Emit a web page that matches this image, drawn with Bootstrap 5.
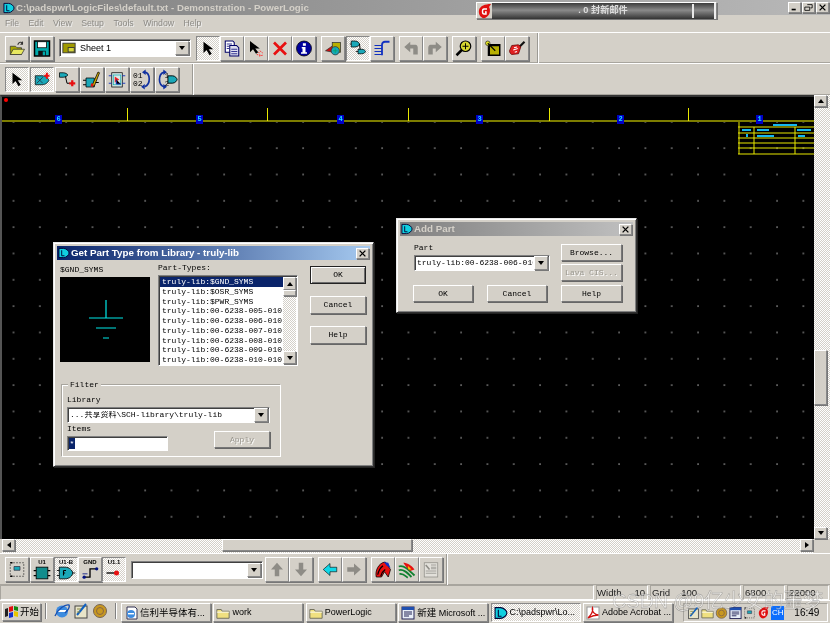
<!doctype html>
<html lang="en">

<head>
	<meta charset="utf-8">
	<meta name="viewport" content="width=device-width, initial-scale=1">
	<title>PowerLogic</title>
	<link href="https://cdn.jsdelivr.net/npm/bootstrap@5.3.5/dist/css/bootstrap.min.css" rel="stylesheet"
		crossorigin="anonymous">
	<style>
		html, body { margin: 0; background: #d4d0c8; overflow: hidden; }
		.app { width: 830px; height: 623px; background: #d4d0c8; overflow: hidden; filter: blur(.5px);
			font-family: "Liberation Sans", "Noto Sans CJK SC", sans-serif; font-size: 10px; color: #000; line-height: 1; }

		.raised { background: #d4d0c8; border: 1px solid; border-color: #fff #888 #888 #fff; box-shadow: 1px 1px 0 #777; }
		.sunken { border: 1px solid; border-color: #808080 #fff #fff #808080; box-shadow: inset 1px 1px 0 #404040; }
		.etched { border: 1px solid; border-color: #a8a59e #fff #fff #a8a59e; }

		.main-title { height: 15px; padding: 0 0 0 3px; background: linear-gradient(90deg, #808080, #b8b8b8); color: #d4d0c8; font-weight: 700; font-size: 9.7px; }
		.mail-box { left: 476px; top: 2px; width: 241px; height: 17px; background: #d4d0c8; }
		.mail-logo { width: 15px; height: 17px; }
		.mail-bar { width: 224px; height: 16px; background: linear-gradient(#3c3c3c, #8a8a8a 45%, #333); color: #ddd; font-size: 9.2px; border-right: 2px solid #eee; }
		.mail-tick { left: 200px; top: 1px; width: 2px; height: 14px; background: #e8e8e8; }
		.win-ctrls { right: 1px; top: 2px; gap: 1px; }
		.win-btn { width: 13px; height: 11px; }
		.menu-strip { height: 17px; padding-left: 5px; gap: 9.5px; color: #8c8a85; font-size: 8.7px; text-shadow: 1px 1px 0 #eee; }

		.bar-row { height: 31px; border-top: 1px solid #fff; box-shadow: inset 0 -1px 0 #a8a59e; }
		.bar-tall { height: 32px; }
		.bar-first { width: 538px; height: 100%; padding-left: 5px; border-right: 1px solid #9c9a94; box-shadow: 1px 0 0 #fff; }
		.bar-second { width: 193px; height: 100%; padding-left: 5px; border-right: 1px solid #9c9a94; box-shadow: 1px 0 0 #fff; }
		.tool { width: 24px; height: 25px; flex: none; padding: 2px; }
		.tool svg { width: 100%; height: 100%; display: block; }
		.tool-on { border-color: #888 #fff #fff #888; box-shadow: none;
			background: repeating-conic-gradient(#fff 0 25%, #d4d0c8 0 50%) 0 0 / 2px 2px; }
		.tool-w { margin-left: 1px; }
		.gap-s { margin-left: 5px; }

		.combo { height: 18px; background: #fff; flex: none; }
		.combo-arrow { width: 14px; height: 14px; margin: 1px; flex: none; }
		.tri-down { width: 0; height: 0; border: 3px solid transparent; border-top: 4px solid #000; border-bottom: 0; }
		.tri-up { width: 0; height: 0; border: 3px solid transparent; border-bottom: 4px solid #000; border-top: 0; }
		.tri-left { width: 0; height: 0; border: 3px solid transparent; border-right: 4px solid #000; border-left: 0; }
		.tri-right { width: 0; height: 0; border: 3px solid transparent; border-left: 4px solid #000; border-right: 0; }
		.sheet-combo { width: 132px; margin-left: 5px; font-size: 9px; }
		.sheet-ico { width: 14px; height: 12px; margin: 0 4px 0 2px; }

		.work-row { height: 444px; }
		.sheet-canvas { width: 814px; position: relative; border-left: 2px solid #555; border-top: 2px solid #333; background-color: #000;
			background-image: radial-gradient(circle at 1px 1px, #999 .5px, transparent .9px);
			background-size: 26.33px 26.33px; background-position: 10.5px -2.5px; overflow: hidden; }
		.rule-line { left: 0; right: 0; top: 23px; height: 2px; background: #7d7d00; }
		.rule-tick { top: 11px; width: 1px; height: 13px; background: #e8e800; }
		.rule-num { top: 18px; width: 7px; height: 9px; background: #0000c8; color: #19e3ff; font: 700 7px/9px "Liberation Mono", monospace; text-align: center; }
		.red-dot { left: 2px; top: 1px; width: 4px; height: 4px; border-radius: 50%; background: #f00; }
		.title-block { left: 736px; top: 25px; width: 76px; height: 33px; }

		.scroll-track { background: repeating-conic-gradient(#fff 0 25%, #d4d0c8 0 50%) 0 0 / 2px 2px; }
		.v-scroll { width: 16px; }
		.sc-btn { width: 13px; height: 12px; flex: none; }
		.v-thumb { width: 13px; height: 55px; margin-top: 243px; }
		.h-row { height: 14px; }
		.h-scroll { width: 811px; margin-left: 2px; }
		.h-thumb { width: 190px; height: 12px; margin-left: 207px; }

		.bottom-bar { height: 32px; padding-left: 5px; border-top: 1px solid #fff; box-shadow: inset 0 -1px 0 #a8a59e; }
		.bottom-end { width: 1px; height: 100%; margin-left: 3px; background: #9c9a94; box-shadow: 1px 0 0 #fff; }
		.tiny-tool { font: 700 6px/6px "Liberation Sans", sans-serif; text-align: center; padding: 1px; }
		.tiny-tool svg { height: 16px; }
		.part-combo { width: 132px; margin-left: 5px; margin-right: 2px; }

		.status-row { height: 15px; gap: 2px; font-size: 9.6px; color: #222; }
		.st-main { width: 594px; height: 100%; }
		.st-width { width: 52px; height: 100%; padding-left: 0; gap: 13px; }
		.st-grid { width: 91px; height: 100%; padding-left: 1px; gap: 11px; }
		.st-num { width: 42px; height: 100%; padding-left: 1px; }

		.task-row { height: 22px; padding: 2px 0 0 2px; border-top: 1px solid #fff; font-size: 9px; }
		.start-btn { width: 39px; height: 18px; font-weight: 400; gap: 1px; padding: 0 1px; flex: none; white-space: nowrap; }
		.start-ico { width: 15px; height: 14px; flex: none; }
		.cjk-txt { font-size: 9.5px; }
		.task-sep { width: 2px; height: 16px; margin: 0 4px; border-left: 1px solid #808080; border-right: 1px solid #fff; flex: none; }
		.quick-ico { width: 16px; height: 16px; flex: none; margin-right: 3px; }
		.quick-first { margin-left: 3px; }
		.task-btn { width: 90px; height: 19px; margin-right: 2.4px; padding: 0 2px; flex: none; gap: 2px; white-space: nowrap; overflow: hidden; }
		.task-on { border-color: #888 #fff #fff #888; box-shadow: none;
			background: repeating-conic-gradient(#fff 0 25%, #d4d0c8 0 50%) 0 0 / 2px 2px; }
		.task-ico { width: 14px; height: 14px; flex: none; }
		.tray { width: 145px; height: 19px; margin-left: 8px; padding: 0 3px; gap: 1px; font-size: 10px; }
		.tray-ico { width: 13px; height: 14px; flex: none; }
		.ime-ico { font-size: 8px; line-height: 14px; white-space: nowrap; overflow: hidden; }
		.clock { margin-left: 9px; }

		.dlg { background: #d4d0c8; border: 1px solid; border-color: #e8e8e8 #303030 #303030 #e8e8e8; box-shadow: inset 1px 1px 0 #fff, inset -1px -1px 0 #808080, 1px 1px 0 #222; padding: 3px; }
		.dlg-lib { left: 53px; top: 242px; width: 321px; height: 225px; }
		.dlg-add { left: 396px; top: 218px; width: 241px; height: 95px; }
		.dlg-title { height: 14px; padding: 0 1px; color: #fff; font-weight: 700; font-size: 9.8px; }
		.title-live { background: linear-gradient(90deg, #0a246a, #a6caf0); }
		.title-idle { background: linear-gradient(90deg, #808080, #c0c0c0); color: #d4d0c8; }
		.dlg-x { width: 13px; height: 11px; margin-left: auto; }
		.dlg-x svg, .win-btn svg { width: 100%; height: 100%; display: block; }
		.dlg-ico { width: 12px; height: 12px; margin-right: 1px; flex: none; }

		.sys-txt { font-family: "Liberation Mono", "Noto Sans CJK SC", monospace; font-size: 8px; color: #000; }
		.dlg-lib-body { padding: 4px 3px 0 3px; gap: 8px; }
		.left-col { width: 90px; margin-top: 2px; }
		.cap { height: 9px; margin-bottom: 2px; white-space: nowrap; }
		.preview { width: 90px; height: 85px; background: #000; }
		.preview svg { display: block; }
		.mid-col { width: 140px; }
		.listbox { width: 140px; height: 91px; background: #fff; padding: 1px; }
		.part-list { width: 124px; border-radius: 0; overflow: hidden; }
		.part-list .list-group-item { border: 0; padding: 0 0 0 2px; height: 9.75px; line-height: 9.75px; font-size: 8px; background: transparent; color: #000; white-space: nowrap; border-radius: 0; }
		.part-list .list-group-item.active { background: #0a246a; color: #fff; }
		.list-scroll { width: 13px; }
		.sc-mini { width: 13px; height: 13px; flex: none; }
		.list-thumb { width: 13px; height: 6px; flex: none; }
		.btn-col { width: 56px; margin: 2px 0 0 4px; gap: 12px; }
		.btn.w-btn { --bs-btn-padding-x: 0; --bs-btn-padding-y: 0; border-radius: 0; font: 400 8px/1 "Liberation Mono", monospace; color: #000; height: 18px; width: 56px; background: #d4d0c8;
			border: 1px solid; border-color: #fff #777 #777 #fff; box-shadow: 1px 1px 0 #666; }
		.btn.w-btn.w-default { border-color: #222; box-shadow: inset 1px 1px 0 #fff, inset -1px -1px 0 #6c6c6c; }
		.btn.w-btn:disabled { opacity: 1; color: #9a978f; text-shadow: 1px 1px 0 #fff; }
		.btn.w-wide { width: 61px; height: 17px; }
		.filter-box { width: 220px; height: 73px; margin: 18px 0 0 4px; padding: 11px 10px 0 5px; border: 1px solid; border-color: #a8a59e #fff #fff #a8a59e; box-shadow: inset 1px 1px 0 #fff; }
		.filter-legend { left: 6px; top: -4px; background: #d4d0c8; padding: 0 2px; }
		.lib-combo { width: 203px; height: 16px; margin-bottom: 2px; }
		.lib-combo .combo-text { padding-left: 2px; white-space: nowrap; overflow: hidden; }
		.form-control.items-input { width: 101px; height: 15px; min-height: 0; padding: 0 0 0 1px; border-radius: 0; background: #fff; font-size: 8px; }
		.sel-star { display: inline-block; width: 6px; height: 11px; background: #0a246a; color: #fff; text-align: center; line-height: 11px; margin-top: 1px; }
		.btn.w-apply { width: 56px; height: 17px; margin-top: -5px; }
		.add-body { padding: 8px 11px 0 14px; }
		.add-left { width: 136px; margin-right: 11px; }
		.add-combo { width: 136px; height: 16px; margin-top: 0; }
		.add-combo .combo-text { padding-left: 2px; white-space: nowrap; overflow: hidden; }
		.add-right { gap: 3px; }
		.add-foot { padding: 4px 11px 0 13px; gap: 14px; }
		.add-foot .w-wide { width: 60px; }
		.add-foot .w-wide:last-child { width: 61px; }

		.watermark { left: 612px; top: 591px; font-size: 20px; letter-spacing: -.2px; color: rgba(255, 255, 255, .45); -webkit-text-stroke: .3px rgba(70, 70, 70, .55); white-space: nowrap; }
	</style>
</head>

<body>
	<svg width="0" height="0" class="position-absolute">
		<defs>
			<symbol id="i-arrow" viewBox="0 0 24 24"><path d="M6 3v15l4-4 4 7 3-2-4-6h6z" fill="#000"/></symbol>
			<symbol id="i-open" viewBox="0 0 24 24"><path d="M3 9h7l2 2h6v9H3z" fill="#a8a800" stroke="#333"/><path d="M3 20l4-7h15l-4 7z" fill="#e8e860" stroke="#333"/><path d="M13 7c1-4 5-4 7-2" fill="none" stroke="#333" stroke-width="1.4"/><path d="M20 2v5h-4z" fill="#333"/></symbol>
			<symbol id="i-save" viewBox="0 0 24 24"><rect x="2" y="2" width="20" height="20" fill="#0aa" stroke="#000" stroke-width="2"/><rect x="6" y="3" width="12" height="8" fill="#fff" stroke="#000"/><rect x="7" y="15" width="10" height="7" fill="#111"/><rect x="13" y="16" width="3" height="5" fill="#0aa"/></symbol>
			<symbol id="i-sheet" viewBox="0 0 16 13"><rect x="1" y="1" width="14" height="11" fill="#a09a00" stroke="#333"/><rect x="7" y="6" width="7" height="5" fill="#d8d840" stroke="#333"/></symbol>
			<symbol id="i-copy" viewBox="0 0 24 24"><path d="M3 2h10l2 2v13H3z" fill="#fff" stroke="#006" stroke-width="1.4"/><path d="M9 8h9l3 3v11H9z" fill="#dde" stroke="#006" stroke-width="1.4"/><path d="M5 6h7M5 9h3M5 12h3M11 13h8M11 16h8M11 19h8" stroke="#228" stroke-width="1.2"/></symbol>
			<symbol id="i-filter" viewBox="0 0 24 24"><path d="M4 2v15l4-4 4 6 3-2-4-5h6z" fill="#000"/><path d="M15 17l2 1M13 20l6 1M17 15l4 3M16 22l5-1" stroke="#f33" stroke-width="1.3" stroke-dasharray="2 1"/></symbol>
			<symbol id="i-x" viewBox="0 0 24 24"><path d="M4 4l16 16M20 4L4 20" stroke="#e81010" stroke-width="3.6"/></symbol>
			<symbol id="i-info" viewBox="0 0 24 24"><circle cx="12" cy="12" r="10" fill="#00009c" stroke="#000"/><rect x="10.500" y="5" width="4" height="3.400" fill="#fff"/><path d="M9 10h5v7h2v2H8v-2h2v-5H9z" fill="#fff"/></symbol>
			<symbol id="i-cell" viewBox="0 0 24 24"><path d="M2 15L12 8v9z" fill="#d01010" stroke="#333"/><rect x="11" y="4" width="11" height="13" fill="#b8b000" stroke="#333"/><circle cx="15" cy="15" r="5.500" fill="#18a8b8" stroke="#333"/><path d="M12 15h6M15 12v6" stroke="#0a6"/></symbol>
			<symbol id="i-gates" viewBox="0 0 24 24"><path d="M3 2h5c4 0 6 3 6 4s-2 4-6 4H3z" fill="#1aa8b8" stroke="#000"/><path d="M14 6l1 9h1" fill="none" stroke="#000" stroke-width="1.4"/><path d="M12 13h5c3 0 5 2 5 3s-2 3-5 3h-5z" fill="#1aa8b8" stroke="#000"/><path d="M1 6h2M9 16h3" stroke="#000"/></symbol>
			<symbol id="i-bus" viewBox="0 0 24 24"><path d="M12 21V7c0-3 2-4 4-4h6" fill="none" stroke="#1030c0" stroke-width="2.4"/><path d="M2 8h10M2 12h10M2 16h10M2 20h10" stroke="#1030c0" stroke-width="1.6"/></symbol>
			<symbol id="i-undo" viewBox="0 0 24 24"><path d="M3 10l8-7v4h7c2 0 3 2 3 4v9h-6v-8h-4v5z" fill="#8e8c86"/></symbol>
			<symbol id="i-redo" viewBox="0 0 24 24"><path d="M21 10l-8-7v4H6c-2 0-3 2-3 4v9h6v-8h4v5z" fill="#8e8c86"/></symbol>
			<symbol id="i-zoom" viewBox="0 0 24 24"><circle cx="14" cy="9" r="7" fill="#d8d830" stroke="#000" stroke-width="1.6"/><path d="M14 5v8M10 9h8" stroke="#000" stroke-width="1.3"/><path d="M9 14l-7 7" stroke="#000" stroke-width="3.400"/></symbol>
			<symbol id="i-sel" viewBox="0 0 24 24"><rect x="5" y="6" width="17" height="16" fill="#000"/><rect x="8" y="9" width="12" height="11" fill="#b8b000"/><circle cx="5" cy="5" r="3" fill="#e8e820" stroke="#333"/><path d="M5 5l10 10" stroke="#000" stroke-width="1.5"/></symbol>
			<symbol id="i-brush" viewBox="0 0 24 24"><path d="M14 9l7-7 2 2-7 7z" fill="#111"/><path d="M5 8l9-1 3 3-3 9-9 1c-2-1-3-3-3-5z" fill="#e02020" stroke="#600"/><path d="M8 11l4-1M7 14l6-2M9 17l3-1" stroke="#fff" stroke-width="1.4"/></symbol>
			<symbol id="i-addcomp" viewBox="0 0 24 24"><path d="M3 7h9c5 0 9 4 9 6s-4 6-9 6H3z" fill="#1aa8b8" stroke="#000"/><path d="M5 9l8 8M13 9l-8 8" stroke="#223"/><path d="M15 7h7M18.500 3v8" stroke="#f01010" stroke-width="2.6"/></symbol>
			<symbol id="i-addwire" viewBox="0 0 24 24"><path d="M2 3h5c3 0 6 2 6 3s-3 3-6 3H2z" fill="#1aa8b8" stroke="#000"/><path d="M10 8l2 9h4" fill="none" stroke="#000" stroke-width="1.3"/><path d="M15 17h8M19 13v8" stroke="#e81010" stroke-width="3"/></symbol>
			<symbol id="i-edit" viewBox="0 0 24 24"><path d="M4 10h11v12H4z" fill="#1aa8b8" stroke="#000"/><path d="M0 13h4M0 19h4M15 16h6" stroke="#000" stroke-width="1.4"/><path d="M12 20L20 2l2 1-7 18z" fill="#d8b000" stroke="#000"/><path d="M11 17l3 1-1 4-3-1z" fill="#e01010"/></symbol>
			<symbol id="i-sym" viewBox="0 0 24 24"><rect x="5" y="3" width="14" height="19" fill="#d8e8e8" stroke="#000"/><rect x="7" y="6" width="10" height="13" fill="none" stroke="#1aa"/><path d="M9 8l6 4-6 4z" fill="#f02020"/><path d="M1 7h4M1 17h4M19 7h4M19 17h4M11 12v6h6" stroke="#1030c0" stroke-width="1.2"/></symbol>
			<symbol id="i-curve" viewBox="0 0 24 24"><path d="M15 4c6 1 7 13 0 16" fill="none" stroke="#1030a0" stroke-width="1.8"/><path d="M16 1v6l-4-3zM15 17v6l-4-3z" fill="#1030a0"/></symbol>
			<symbol id="i-swap" viewBox="0 0 24 24"><path d="M9 4C2 6 2 18 9 20" fill="none" stroke="#1030a0" stroke-width="1.8"/><path d="M8 1v6l4-3zM8 17v6l4-3z" fill="#1030a0"/><path d="M13 8h5c3 0 5 3 5 4s-2 4-5 4h-5z" fill="#1aa8b8" stroke="#000"/></symbol>
			<symbol id="i-frame" viewBox="0 0 24 24"><rect x="3" y="3" width="18" height="18" fill="none" stroke="#222" stroke-dasharray="2 2"/><path d="M8 8h8v5H8z" fill="#1aa8b8" stroke="#334"/><path d="M3 21h3M3 3h3" stroke="#000" stroke-width="2"/></symbol>
			<symbol id="i-chip" viewBox="0 0 24 16"><rect x="5" y="1" width="14" height="14" fill="#128c8c" stroke="#000"/><path d="M2 5h3M2 11h3M19 5h3M19 11h3" stroke="#000" stroke-width="1.5"/></symbol>
			<symbol id="i-gate" viewBox="0 0 24 16"><path d="M4 1h7c5 0 9 4 9 7s-4 7-9 7H4z" fill="#1aa8b8" stroke="#000"/><path d="M1 5h3M1 11h3M20 8h3" stroke="#000"/><path d="M9 5v6M9 5h3M9 8h2" stroke="#000" stroke-width="1.3"/></symbol>
			<symbol id="i-net" viewBox="0 0 24 16"><path d="M5 13h7V3h8" fill="none" stroke="#000" stroke-width="1.6"/><circle cx="20" cy="3" r="2" fill="#001080"/><circle cx="5" cy="13" r="2" fill="#001080"/><path d="M3 9h6" stroke="#001080"/></symbol>
			<symbol id="i-pin" viewBox="0 0 24 16"><path d="M3 8h11" stroke="#000" stroke-width="1.6"/><circle cx="15" cy="8" r="3" fill="#e81010"/></symbol>
			<symbol id="i-up" viewBox="0 0 24 24"><path d="M12 3l8 9h-5v9H9v-9H4z" fill="#8e8c86"/></symbol>
			<symbol id="i-down" viewBox="0 0 24 24"><path d="M12 21l8-9h-5V3H9v9H4z" fill="#8e8c86"/></symbol>
			<symbol id="i-left" viewBox="0 0 24 24"><path d="M3 12l9-8v5h9v6h-9v5z" fill="#10d8e8" stroke="#000" stroke-width=".8"/></symbol>
			<symbol id="i-right" viewBox="0 0 24 24"><path d="M21 12l-9-8v5H3v6h9v5z" fill="#8e8c86"/></symbol>
			<symbol id="i-pour" viewBox="0 0 24 24"><path d="M3 22C1 14 6 3 15 2l7 10-3 10-5-7-4 7z" fill="#e81010" stroke="#000"/><path d="M5 19c1-5 3-9 7-12M9 21c1-4 3-7 6-9" stroke="#000" stroke-width="1.6" fill="none"/><path d="M13 2l6 1 3 7-5-3z" fill="#1030c0"/></symbol>
			<symbol id="i-flame" viewBox="0 0 24 24"><path d="M1 8c7-2 12 3 21 12M1 13c6-2 11 3 17 9M2 18c5-1 7 2 11 5" fill="none" stroke="#108030" stroke-width="2.4"/><path d="M7 3c5 0 11 3 15 9l-6 2C12 10 10 7 7 3z" fill="#e81010"/><path d="M13 7l5 5-4 0z" fill="#f0e000"/></symbol>
			<symbol id="i-doc" viewBox="0 0 24 24"><rect x="3" y="3" width="18" height="19" fill="#e2e0da" stroke="#8e8c86"/><path d="M5 14h14M5 17h14M12 6h7M12 9h7M12 11h7" stroke="#8e8c86"/><path d="M5 6l5 6" stroke="#8e8c86" stroke-width="2"/></symbol>
			<symbol id="i-logo" viewBox="0 0 13 12"><path d="M1 1h5c3 0 6 3 6 5s-3 5-6 5H1z" fill="#10d0e0" stroke="#003" stroke-width="1"/><path d="M4 3v6h3" fill="none" stroke="#003"/></symbol>
			<symbol id="i-folder" viewBox="0 0 16 14"><path d="M1 3h5l1 2h8v8H1z" fill="#f0e080" stroke="#665"/><path d="M1 6h14" stroke="#fff"/></symbol>
			<symbol id="i-win" viewBox="0 0 15 14"><path d="M1 4l3-1v8l-3 1z" fill="#222"/><path d="M5 2l4-1v5l-4 1z" fill="#e01010"/><path d="M10 1l4 1v4l-4-1z" fill="#108810"/><path d="M5 8l4-1v5l-4 1z" fill="#1030d0"/><path d="M10 6l4 1v5l-4-1z" fill="#e8c800"/></symbol>
			<symbol id="i-ie" viewBox="0 0 16 16"><ellipse cx="8" cy="8.500" rx="6" ry="6" fill="#3d8ce0"/><rect x="4" y="7" width="8" height="2" fill="#fff"/><path d="M1 13C4 6 11 1 15 2c1 2-2 6-4 8" fill="none" stroke="#1a50b0" stroke-width="1.4"/></symbol>
			<symbol id="i-desk" viewBox="0 0 16 16"><rect x="2" y="3" width="12" height="12" fill="#e8e4c8" stroke="#444"/><path d="M4 12L13 1" stroke="#1060c0" stroke-width="2"/><path d="M4 6h4M4 9h3" stroke="#884"/></symbol>
			<symbol id="i-coin" viewBox="0 0 16 16"><circle cx="8" cy="8" r="6.500" fill="#c89820" stroke="#765"/><circle cx="8" cy="8" r="3.500" fill="none" stroke="#864"/></symbol>
			<symbol id="i-pageie" viewBox="0 0 14 14"><path d="M3 1h8l2 2v10H3z" fill="#fff" stroke="#335"/><circle cx="7" cy="8" r="4" fill="#3d8ce0"/><rect x="4" y="7" width="6" height="1.400" fill="#fff"/></symbol>
			<symbol id="i-word" viewBox="0 0 14 14"><rect x="1" y="1" width="12" height="12" fill="#e8eef8" stroke="#225"/><rect x="1" y="1" width="12" height="3" fill="#2050b0"/><path d="M3 6h8M3 8h8M3 10h5" stroke="#225"/></symbol>
			<symbol id="i-pdf" viewBox="0 0 14 14"><rect x="1" y="1" width="12" height="12" fill="#fff" stroke="#999"/><path d="M2 12C6 8 7 4 6.500 2c-1 3 2 7 6 7-3 0-7 1-10.500 3z" fill="none" stroke="#d01010" stroke-width="1.3"/></symbol>
			<symbol id="i-mailg" viewBox="0 0 15 17"><path d="M2 7C3 3 8 1 14 1l-2 3c2 3 1 9-4 11-4 1-7-4-6-8z" fill="#e01010"/><path d="M10 6H7C5 6 5 11 7 11h2V9H8" fill="none" stroke="#fff" stroke-width="1.4"/></symbol>
		</defs>
	</svg>

	<div class="app d-flex flex-column position-relative">

		<div class="main-title d-flex align-items-center position-relative">
			<svg class="dlg-ico"><use href="#i-logo"/></svg>
			<span>C:\padspwr\LogicFiles\default.txt - Demonstration - PowerLogic</span>
			<div class="mail-box position-absolute d-flex raised">
				<svg class="mail-logo"><use href="#i-mailg"/></svg>
				<div class="mail-bar d-flex align-items-center justify-content-center position-relative">
					<span>. 0 封新邮件</span>
					<span class="mail-tick position-absolute"></span>
				</div>
			</div>
			<div class="win-ctrls position-absolute d-flex">
				<div class="win-btn raised"><svg viewBox="0 0 13 11"><path d="M3 8h5" stroke="#000" stroke-width="2"/></svg></div>
				<div class="win-btn raised"><svg viewBox="0 0 13 11"><path d="M5 2h6v4H9M2 5h6v4H2z" fill="none" stroke="#000"/></svg></div>
				<div class="win-btn raised"><svg viewBox="0 0 13 11"><path d="M3 2l7 7M10 2l-7 7" stroke="#000" stroke-width="1.6"/></svg></div>
			</div>
		</div>

		<div class="menu-strip d-flex align-items-center">
			<span>File</span><span>Edit</span><span>View</span><span>Setup</span><span>Tools</span><span>Window</span><span>Help</span>
		</div>

		<div class="bar-row d-flex">
			<div class="bar-first d-flex align-items-center">
				<div class="tool raised"><svg><use href="#i-open"/></svg></div>
				<div class="tool raised tool-w"><svg><use href="#i-save"/></svg></div>
				<div class="combo sheet-combo sunken d-flex align-items-center">
					<svg class="sheet-ico"><use href="#i-sheet"/></svg>
					<span class="flex-grow-1">Sheet 1</span>
					<div class="combo-arrow raised d-flex align-items-center justify-content-center"><span class="tri-down"></span></div>
				</div>
				<div class="tool raised tool-on gap-s"><svg><use href="#i-arrow"/></svg></div>
				<div class="tool raised"><svg><use href="#i-copy"/></svg></div>
				<div class="tool raised"><svg><use href="#i-filter"/></svg></div>
				<div class="tool raised"><svg><use href="#i-x"/></svg></div>
				<div class="tool raised"><svg><use href="#i-info"/></svg></div>
				<div class="tool raised gap-s"><svg><use href="#i-cell"/></svg></div>
				<div class="tool raised tool-on tool-w"><svg><use href="#i-gates"/></svg></div>
				<div class="tool raised"><svg><use href="#i-bus"/></svg></div>
				<div class="tool raised gap-s"><svg><use href="#i-undo"/></svg></div>
				<div class="tool raised"><svg><use href="#i-redo"/></svg></div>
				<div class="tool raised gap-s"><svg><use href="#i-zoom"/></svg></div>
				<div class="tool raised gap-s"><svg><use href="#i-sel"/></svg></div>
				<div class="tool raised"><svg><use href="#i-brush"/></svg></div>
			</div>
		</div>

		<div class="bar-row bar-tall d-flex">
			<div class="bar-second d-flex align-items-center">
				<div class="tool raised tool-on"><svg><use href="#i-arrow"/></svg></div>
				<div class="tool raised tool-on tool-w"><svg><use href="#i-addcomp"/></svg></div>
				<div class="tool raised tool-w"><svg><use href="#i-addwire"/></svg></div>
				<div class="tool raised tool-w"><svg><use href="#i-edit"/></svg></div>
				<div class="tool raised tool-w"><svg><use href="#i-sym"/></svg></div>
				<div class="tool raised tool-w position-relative sys-txt d-flex flex-column justify-content-center">
					<span>01</span><span>02</span>
					<svg class="position-absolute top-0 start-0"><use href="#i-curve"/></svg>
				</div>
				<div class="tool raised tool-w position-relative sys-txt d-flex flex-column align-items-center justify-content-center">
					<span>1</span><span>2</span>
					<svg class="position-absolute top-0 start-0"><use href="#i-swap"/></svg>
				</div>
			</div>
		</div>

		<div class="work-row d-flex">
			<div class="sheet-canvas">
				<span class="red-dot position-absolute"></span>
				<div class="rule-line position-absolute"></div>
				<span class="rule-tick position-absolute" style="left:125px"></span>
				<span class="rule-tick position-absolute" style="left:265px"></span>
				<span class="rule-tick position-absolute" style="left:406px"></span>
				<span class="rule-tick position-absolute" style="left:547px"></span>
				<span class="rule-tick position-absolute" style="left:686px"></span>
				<span class="rule-num position-absolute" style="left:53px">6</span>
				<span class="rule-num position-absolute" style="left:194px">5</span>
				<span class="rule-num position-absolute" style="left:335px">4</span>
				<span class="rule-num position-absolute" style="left:474px">3</span>
				<span class="rule-num position-absolute" style="left:615px">2</span>
				<span class="rule-num position-absolute" style="left:754px">1</span>
				<svg class="title-block position-absolute" viewBox="0 0 76 33">
					<path d="M1 0v32M16 5v27M57 5v27M0 5h76M0 11h76M0 16h76M0 21h76M0 26h76M0 32h76" fill="none" stroke="#e8e800" stroke-width="1"/>
					<rect x="35" y="2" width="24" height="2" fill="#14b8f0"/>
					<rect x="4" y="7" width="9" height="2" fill="#14b8f0"/><rect x="19" y="7" width="12" height="2" fill="#14b8f0"/><rect x="59" y="7" width="14" height="2" fill="#14b8f0"/>
					<rect x="8" y="12" width="2" height="3" fill="#14b8f0"/><rect x="19" y="13" width="17" height="2" fill="#14b8f0"/><rect x="60" y="13" width="7" height="2" fill="#14b8f0"/>
				</svg>
			</div>
			<div class="v-scroll scroll-track d-flex flex-column">
				<div class="sc-btn raised d-flex align-items-center justify-content-center"><span class="tri-up"></span></div>
				<div class="v-thumb raised"></div>
				<div class="flex-grow-1"></div>
				<div class="sc-btn raised d-flex align-items-center justify-content-center"><span class="tri-down"></span></div>
			</div>
		</div>

		<div class="h-row d-flex">
			<div class="h-scroll scroll-track d-flex">
				<div class="sc-btn raised d-flex align-items-center justify-content-center"><span class="tri-left"></span></div>
				<div class="h-thumb raised"></div>
				<div class="flex-grow-1"></div>
				<div class="sc-btn raised d-flex align-items-center justify-content-center"><span class="tri-right"></span></div>
			</div>
		</div>

		<div class="bottom-bar d-flex align-items-center">
			<div class="tool raised"><svg><use href="#i-frame"/></svg></div>
			<div class="tool raised tool-w tiny-tool"><div>U1</div><svg><use href="#i-chip"/></svg></div>
			<div class="tool raised tool-on tiny-tool"><div>U1-B</div><svg><use href="#i-gate"/></svg></div>
			<div class="tool raised tiny-tool"><div>GND</div><svg><use href="#i-net"/></svg></div>
			<div class="tool raised tool-on tiny-tool"><div>U1.1</div><svg><use href="#i-pin"/></svg></div>
			<div class="combo part-combo sunken d-flex align-items-center justify-content-end">
				<div class="combo-arrow raised d-flex align-items-center justify-content-center"><span class="tri-down"></span></div>
			</div>
			<div class="tool raised"><svg><use href="#i-up"/></svg></div>
			<div class="tool raised"><svg><use href="#i-down"/></svg></div>
			<div class="tool raised gap-s"><svg><use href="#i-left"/></svg></div>
			<div class="tool raised"><svg><use href="#i-right"/></svg></div>
			<div class="tool raised gap-s"><svg><use href="#i-pour"/></svg></div>
			<div class="tool raised"><svg><use href="#i-flame"/></svg></div>
			<div class="tool raised"><svg><use href="#i-doc"/></svg></div>
			<div class="bottom-end"></div>
		</div>

		<div class="status-row d-flex">
			<div class="st-main etched"></div>
			<div class="st-width etched d-flex align-items-center"><span>Width</span><span>10</span></div>
			<div class="st-grid etched d-flex align-items-center"><span>Grid</span><span>100</span></div>
			<div class="st-num etched d-flex align-items-center">6800</div>
			<div class="st-num etched d-flex align-items-center">22000</div>
		</div>

		<div class="task-row d-flex align-items-start">
			<div class="start-btn raised d-flex align-items-center"><svg class="start-ico"><use href="#i-win"/></svg><span class="cjk-txt">开始</span></div>
			<span class="task-sep"></span>
			<svg class="quick-ico quick-first"><use href="#i-ie"/></svg>
			<svg class="quick-ico"><use href="#i-desk"/></svg>
			<svg class="quick-ico"><use href="#i-coin"/></svg>
			<span class="task-sep"></span>
			<div class="task-btn raised d-flex align-items-center"><svg class="task-ico"><use href="#i-pageie"/></svg><span class="cjk-txt">信利半导体有...</span></div>
			<div class="task-btn raised d-flex align-items-center"><svg class="task-ico"><use href="#i-folder"/></svg><span>work</span></div>
			<div class="task-btn raised d-flex align-items-center"><svg class="task-ico"><use href="#i-folder"/></svg><span>PowerLogic</span></div>
			<div class="task-btn raised d-flex align-items-center"><svg class="task-ico"><use href="#i-word"/></svg><span><span class="cjk-txt">新建</span> Microsoft ...</span></div>
			<div class="task-btn raised task-on d-flex align-items-center"><svg class="task-ico"><use href="#i-logo"/></svg><span>C:\padspwr\Lo...</span></div>
			<div class="task-btn raised d-flex align-items-center"><svg class="task-ico"><use href="#i-pdf"/></svg><span>Adobe Acrobat ...</span></div>
			<div class="tray etched d-flex align-items-center">
				<svg class="tray-ico"><use href="#i-desk"/></svg>
				<svg class="tray-ico"><use href="#i-folder"/></svg>
				<svg class="tray-ico"><use href="#i-coin"/></svg>
				<svg class="tray-ico"><use href="#i-word"/></svg>
				<svg class="tray-ico"><use href="#i-frame"/></svg>
				<svg class="tray-ico"><use href="#i-mailg"/></svg>
				<span class="tray-ico ime-ico text-bg-primary text-center">CH</span>
				<span class="clock">16:49</span>
			</div>
		</div>

		<div class="dlg dlg-lib position-absolute">
			<div class="dlg-title title-live d-flex align-items-center">
				<svg class="dlg-ico"><use href="#i-logo"/></svg>
				<span>Get Part Type from Library - truly-lib</span>
				<div class="dlg-x raised"><svg viewBox="0 0 13 11"><path d="M3 2l7 7M10 2l-7 7" stroke="#000" stroke-width="1.6"/></svg></div>
			</div>
			<div class="dlg-lib-body d-flex sys-txt">
				<div class="left-col">
					<div class="cap">$GND_SYMS</div>
					<div class="preview">
						<svg width="90" height="85" viewBox="0 0 90 85">
							<path d="M46 23v18M29 41h34M36 51h20M43 61h6" stroke="#00e8e8" stroke-width="1.2" fill="none"/>
						</svg>
					</div>
				</div>
				<div class="mid-col">
					<div class="cap">Part-Types:</div>
					<div class="listbox sunken d-flex">
						<div class="part-list list-group flex-grow-1 sys-txt">
							<div class="list-group-item active">truly-lib:$GND_SYMS</div>
							<div class="list-group-item">truly-lib:$OSR_SYMS</div>
							<div class="list-group-item">truly-lib:$PWR_SYMS</div>
							<div class="list-group-item">truly-lib:00-6238-005-010-</div>
							<div class="list-group-item">truly-lib:00-6238-006-010-</div>
							<div class="list-group-item">truly-lib:00-6238-007-010-</div>
							<div class="list-group-item">truly-lib:00-6238-008-010-</div>
							<div class="list-group-item">truly-lib:00-6238-009-010-</div>
							<div class="list-group-item">truly-lib:00-6238-010-010-</div>
						</div>
						<div class="list-scroll scroll-track d-flex flex-column">
							<div class="sc-mini raised d-flex align-items-center justify-content-center"><span class="tri-up"></span></div>
							<div class="list-thumb raised"></div>
							<div class="flex-grow-1"></div>
							<div class="sc-mini raised d-flex align-items-center justify-content-center"><span class="tri-down"></span></div>
						</div>
					</div>
				</div>
				<div class="btn-col d-flex flex-column">
					<button class="btn w-btn w-default">OK</button>
					<button class="btn w-btn">Cancel</button>
					<button class="btn w-btn">Help</button>
				</div>
			</div>
			<div class="filter-box position-relative sys-txt">
				<span class="filter-legend position-absolute">Filter</span>
				<div class="cap">Library</div>
				<div class="combo lib-combo sunken d-flex align-items-center">
					<span class="combo-text flex-grow-1">...共享资料\SCH-library\truly-lib</span>
					<div class="combo-arrow raised d-flex align-items-center justify-content-center"><span class="tri-down"></span></div>
				</div>
				<div class="cap">Items</div>
				<div class="d-flex justify-content-between align-items-start">
					<div class="form-control items-input sunken"><span class="sel-star">*</span></div>
					<button class="btn w-btn w-apply" disabled>Apply</button>
				</div>
			</div>
		</div>

		<div class="dlg dlg-add position-absolute">
			<div class="dlg-title title-idle d-flex align-items-center">
				<svg class="dlg-ico"><use href="#i-logo"/></svg>
				<span>Add Part</span>
				<div class="dlg-x raised"><svg viewBox="0 0 13 11"><path d="M3 2l7 7M10 2l-7 7" stroke="#000" stroke-width="1.6"/></svg></div>
			</div>
			<div class="add-body d-flex sys-txt">
				<div class="add-left">
					<div class="cap">Part</div>
					<div class="combo add-combo sunken d-flex align-items-center">
						<span class="combo-text flex-grow-1">truly-lib:00-6238-006-010</span>
						<div class="combo-arrow raised d-flex align-items-center justify-content-center"><span class="tri-down"></span></div>
					</div>
				</div>
				<div class="add-right d-flex flex-column">
					<button class="btn w-btn w-wide">Browse...</button>
					<button class="btn w-btn w-wide" disabled>Lava CIS...</button>
				</div>
			</div>
			<div class="add-foot d-flex">
				<button class="btn w-btn w-wide">OK</button>
				<button class="btn w-btn w-wide">Cancel</button>
				<button class="btn w-btn w-wide">Help</button>
			</div>
		</div>

		<div class="watermark position-absolute">CSDN @9亿少女的噩梦</div>
	</div>

	<script src="https://cdn.jsdelivr.net/npm/bootstrap@5.3.5/dist/js/bootstrap.bundle.min.js"
		crossorigin="anonymous"></script>
</body>

</html>
